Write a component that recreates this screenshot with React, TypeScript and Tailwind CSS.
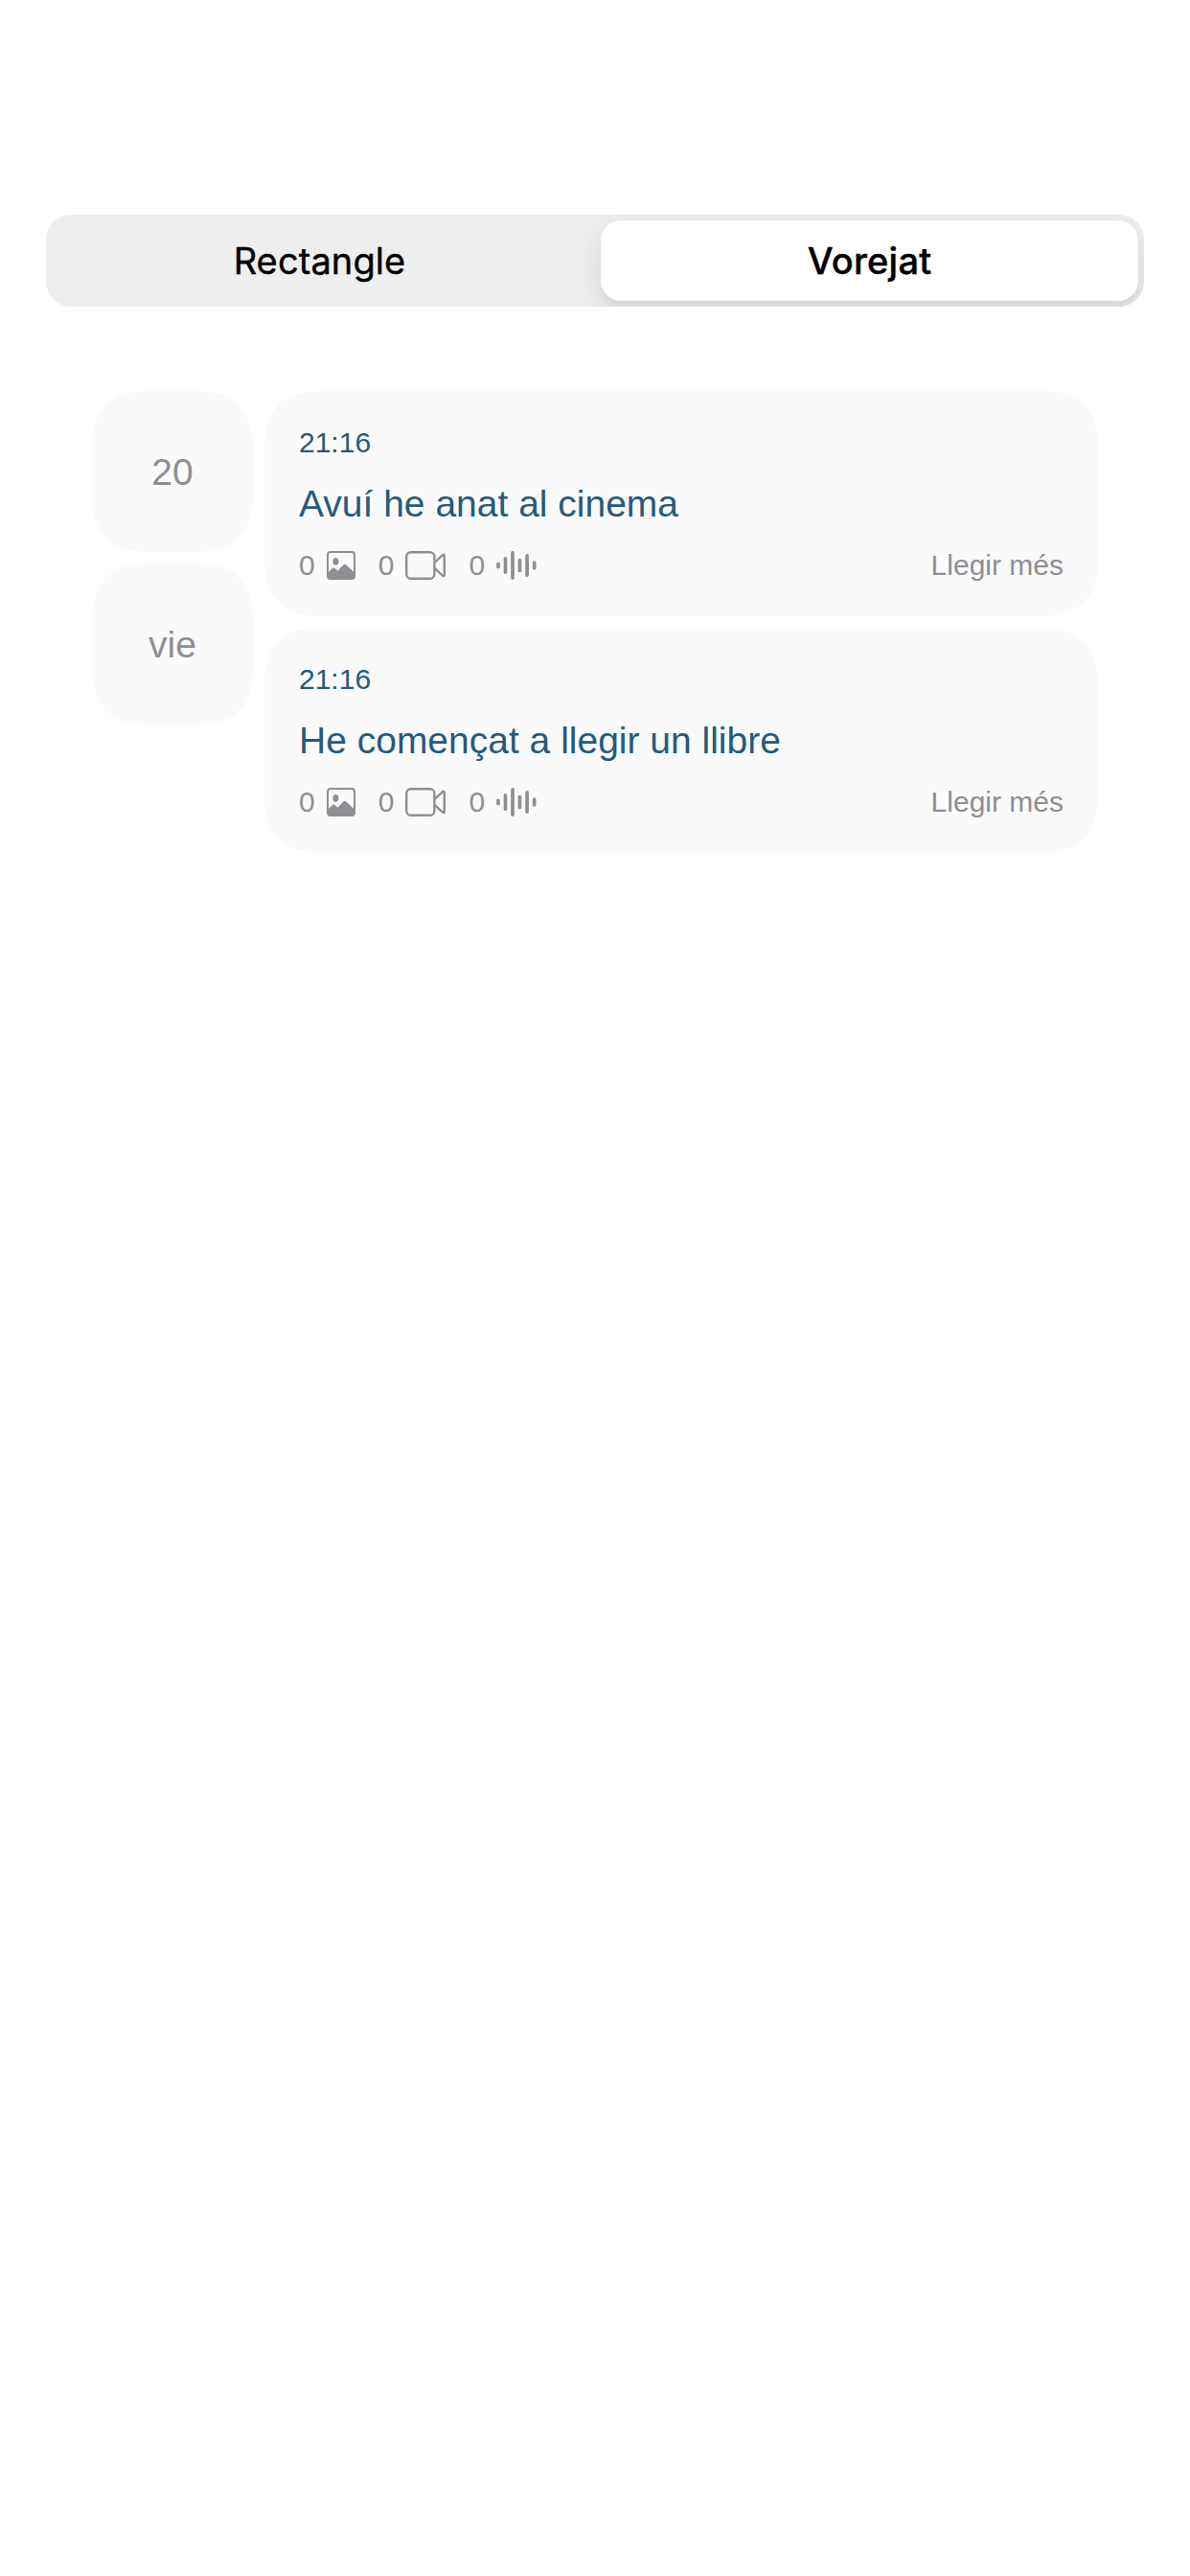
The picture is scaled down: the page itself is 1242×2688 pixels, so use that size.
const entries = [
  { time: "21:16", title: "Avuí he anat al cinema" },
  { time: "21:16", title: "He començat a llegir un llibre" },
];

function PhotoIcon() {
  return (
    <svg className="h-[30px] w-[30px]" viewBox="0 0 30 30" fill="none">
      <rect x="1" y="1" width="28" height="28" rx="3" stroke="currentColor" strokeWidth="2" />
      <ellipse cx="9.4" cy="10.9" rx="3" ry="3.8" fill="currentColor" />
      <path
        d="M1 22.8L6.3 17.7Q7.4 16.9 8.5 17.9L11.4 20.7L17.4 14.5Q18.9 13.2 20.4 14.5L29 22.8V27Q29 29.3 26.7 29.3H3.3Q1 29.3 1 27Z"
        fill="currentColor"
      />
    </svg>
  );
}

function VideoIcon() {
  return (
    <svg className="h-[30px] w-[42px]" viewBox="0 0 42 30" fill="none" stroke="currentColor" strokeWidth="2.4">
      <rect x="1.2" y="1.2" width="29.2" height="27.6" rx="4.6" />
      <path d="M30.6 12L38.8 4.3Q40.8 2.9 40.8 5V24.8Q40.8 26.9 38.8 25.5L30.6 17.8" strokeLinejoin="round" />
    </svg>
  );
}

function WaveIcon() {
  return (
    <svg className="h-[30px] w-[42px]" viewBox="0 0 42 30" stroke="currentColor" strokeWidth="3.7" strokeLinecap="round">
      <path d="M2 13.4V16.6M9.5 7.9V22.1M17 1.9V28.1M24.5 9.5V20.5M32.1 4.9V25.1M39.7 12.2V17.8" />
    </svg>
  );
}

function Card({ time, title }: { time: string; title: string }) {
  return (
    <article className="flex h-[235px] flex-col rounded-[60px] bg-[#fafafa] px-9 pt-9 text-[30px] leading-9 text-[#8e8e93] [corner-shape:superellipse(1.3)]">
      <time className="text-[#265a7c]">{time}</time>
      <h2 className="mt-4 text-[39px] leading-[60px] text-[#265a7c]">{title}</h2>
      <div className="mt-4 flex items-center">
        <div className="flex items-center gap-6">
          <span className="flex items-center gap-3">0<PhotoIcon /></span>
          <span className="flex items-center gap-3">0<VideoIcon /></span>
          <span className="flex items-center gap-3">0<WaveIcon /></span>
        </div>
        <button className="ml-auto">Llegir més</button>
      </div>
    </article>
  );
}

function Tile({ label }: { label: string }) {
  return (
    <div className="flex size-[168px] items-center justify-center rounded-[60px] bg-[#fafafa] pt-[2px] text-[39px] text-[#8e8e93] [corner-shape:superellipse(1.3)]">
      {label}
    </div>
  );
}

export default function App() {
  return (
    <main className="min-h-[2688px] w-[1242px] bg-white px-12 pt-[224px] font-['Liberation_Sans',sans-serif]">
      <div className="flex h-24 items-center overflow-hidden rounded-[26px] bg-[#eeeeee] pr-[6px] font-[Inter,sans-serif] text-[38px] text-black">
        <button className="w-[579px] pr-2 text-center tracking-[0.1px] [-webkit-text-stroke:0.4px_black]">
          Rectangle
        </button>
        <button className="h-[84px] flex-1 rounded-[21px] bg-white font-medium tracking-[0.2px] shadow-[0_9px_24px_rgba(0,0,0,0.11),0_9px_3px_rgba(0,0,0,0.02)] [-webkit-text-stroke:0.4px_black]">
          Vorejat
        </button>
      </div>
      <section className="mt-[88px] flex gap-3 px-12">
        <div className="flex flex-col gap-3">
          <Tile label="20" />
          <Tile label="vie" />
        </div>
        <div className="flex flex-1 flex-col gap-3">
          {entries.map((e) => (
            <Card key={e.title} {...e} />
          ))}
        </div>
      </section>
    </main>
  );
}
